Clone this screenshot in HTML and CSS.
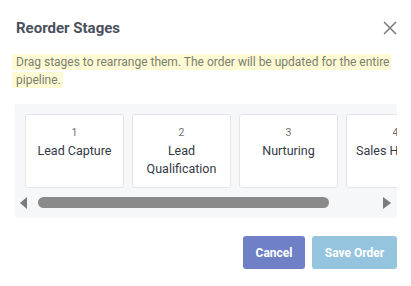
FILE: index.html
```html
<!DOCTYPE html>
<html>
<head>
<meta charset="utf-8">
<link rel="stylesheet" href="styles.css">
</head>
<body>
<div class="modal">
  <div class="header">
    <h2 class="title">Reorder Stages</h2>
    <button class="close" aria-label="Close">
      <svg width="14" height="14" viewBox="0 0 14 14"><path d="M1 1L13 13M13 1L1 13" stroke="#7a7a7a" stroke-width="1.5" fill="none"/></svg>
    </button>
  </div>
  <p class="hint"><span class="mark">Drag stages to rearrange them. The order will be updated for the entire pipeline.</span></p>
  <div class="stages-box">
    <div class="stages">
      <div class="stage"><div class="num">1</div><div class="name">Lead Capture</div></div>
      <div class="stage"><div class="num">2</div><div class="name">Lead Qualification</div></div>
      <div class="stage"><div class="num">3</div><div class="name">Nurturing</div></div>
      <div class="stage"><div class="num">4</div><div class="name">Sales Handoff</div></div>
    </div>
    <div class="scrollbar">
      <span class="arrow left"></span>
      <div class="track"><div class="thumb"></div></div>
      <span class="arrow right"></span>
    </div>
  </div>
  <div class="footer">
    <button class="btn cancel">Cancel</button>
    <button class="btn save">Save Order</button>
  </div>
</div>
</body>
</html>
```
FILE: styles.css
```css
* { box-sizing: border-box; }
html, body { margin: 0; padding: 0; background: #fff; }
body { font-family: Roboto, "Noto Sans", sans-serif; }
.modal { width: 411px; height: 286px; padding: 0 14px 0 15px; }
.header { display: flex; align-items: center; justify-content: space-between; height: 54px; padding: 2px 0 0 1px; }
.title { margin: 0; font-size: 15px; font-weight: 700; color: #4a505c; letter-spacing: 0; }
.close { border: 0; background: none; padding: 0; margin-right: 0; width: 14px; height: 14px; display: flex; }
.hint { margin: 0 0 0 -3px; font-size: 12px; line-height: 17.5px; color: #7b7f70; }
.mark { background: #fefad3; padding: 1px 2px 1px 4px; -webkit-box-decoration-break: clone; box-decoration-break: clone; }
.stages-box { margin-top: 15px; background: #f6f7f9; border-radius: 2px; padding: 10px 0 0 10px; height: 114px; overflow: hidden; }
.stages { display: flex; gap: 8px; overflow: hidden; }
.stage { flex: 0 0 99px; height: 74px; background: #fff; border: 1px solid #e3e5e9; border-radius: 3px; text-align: center; padding-top: 10px; }
.num { font-size: 10.5px; line-height: 16px; color: #707070; }
.name { font-size: 12.5px; line-height: 18px; color: #333a45; margin-top: 1px; white-space: normal; }
.scrollbar { display: flex; align-items: center; height: 13px; margin: 8px 0 0 -5px; width: 371px; }
.arrow { width: 0; height: 0; border-top: 6px solid transparent; border-bottom: 6px solid transparent; }
.arrow.left { border-right: 7px solid #7b7b7b; margin-right: 11px; }
.arrow.right { border-left: 8px solid #7b7b7b; margin-left: auto; }
.track { width: 291px; }
.thumb { height: 11px; background: #8a8a8a; border-radius: 6px; }
.footer { display: flex; justify-content: flex-end; gap: 7px; margin-top: 18px; }
.btn { border: 0; border-radius: 3px; height: 33px; color: #fff; font-family: Roboto, sans-serif; font-size: 12px; font-weight: 700; padding: 0; }
.cancel { background: #7080c6; width: 62px; }
.save { background: #95c5de; width: 85px; }
```
